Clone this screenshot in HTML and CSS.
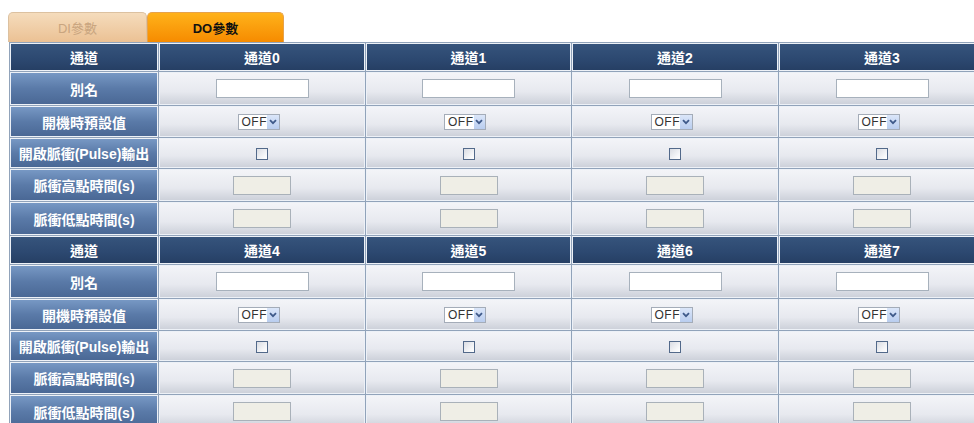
FILE: index.html
```html
<!DOCTYPE html>
<html lang="zh-Hant">
<head>
<meta charset="utf-8">
<title>DO參數</title>
<link rel="stylesheet" href="styles.css">
</head>
<body>
<div class="page">
  <div class="tabs">
    <div class="tab tab-off">DI參數</div>
    <div class="tab tab-on">DO參數</div>
  </div>
  <table class="grid">
    <colgroup>
      <col class="col-label"><col class="col-a"><col class="col-b"><col class="col-a"><col class="col-a">
    </colgroup>
    <tbody>
      <tr class="r-head">
        <td>通道</td><td>通道0</td><td>通道1</td><td>通道2</td><td>通道3</td>
      </tr>
      <tr class="r-alias">
        <td class="lbl">別名</td>
        <td class="val"><input class="txt" type="text"></td>
        <td class="val"><input class="txt" type="text"></td>
        <td class="val"><input class="txt" type="text"></td>
        <td class="val"><input class="txt" type="text"></td>
      </tr>
      <tr class="r-power">
        <td class="lbl">開機時預設值</td>
        <td class="val"><span class="sel"><span class="sel-text">OFF</span><span class="sel-btn"><svg viewBox="0 0 8 6" width="8" height="6"><path d="M1 1.2 4 4.2 7 1.2" fill="none" stroke="#3f5a8a" stroke-width="1.8"/></svg></span></span></td>
        <td class="val"><span class="sel"><span class="sel-text">OFF</span><span class="sel-btn"><svg viewBox="0 0 8 6" width="8" height="6"><path d="M1 1.2 4 4.2 7 1.2" fill="none" stroke="#3f5a8a" stroke-width="1.8"/></svg></span></span></td>
        <td class="val"><span class="sel"><span class="sel-text">OFF</span><span class="sel-btn"><svg viewBox="0 0 8 6" width="8" height="6"><path d="M1 1.2 4 4.2 7 1.2" fill="none" stroke="#3f5a8a" stroke-width="1.8"/></svg></span></span></td>
        <td class="val"><span class="sel"><span class="sel-text">OFF</span><span class="sel-btn"><svg viewBox="0 0 8 6" width="8" height="6"><path d="M1 1.2 4 4.2 7 1.2" fill="none" stroke="#3f5a8a" stroke-width="1.8"/></svg></span></span></td>
      </tr>
      <tr class="r-pulse">
        <td class="lbl">開啟脈衝(Pulse)輸出</td>
        <td class="val"><input class="chk" type="checkbox"></td>
        <td class="val"><input class="chk" type="checkbox"></td>
        <td class="val"><input class="chk" type="checkbox"></td>
        <td class="val"><input class="chk" type="checkbox"></td>
      </tr>
      <tr class="r-high">
        <td class="lbl">脈衝高點時間(s)</td>
        <td class="val"><input class="num" type="text" disabled></td>
        <td class="val"><input class="num" type="text" disabled></td>
        <td class="val"><input class="num" type="text" disabled></td>
        <td class="val"><input class="num" type="text" disabled></td>
      </tr>
      <tr class="r-low">
        <td class="lbl">脈衝低點時間(s)</td>
        <td class="val"><input class="num" type="text" disabled></td>
        <td class="val"><input class="num" type="text" disabled></td>
        <td class="val"><input class="num" type="text" disabled></td>
        <td class="val"><input class="num" type="text" disabled></td>
      </tr>
      <tr class="r-head">
        <td>通道</td><td>通道4</td><td>通道5</td><td>通道6</td><td>通道7</td>
      </tr>
      <tr class="r-alias">
        <td class="lbl">別名</td>
        <td class="val"><input class="txt" type="text"></td>
        <td class="val"><input class="txt" type="text"></td>
        <td class="val"><input class="txt" type="text"></td>
        <td class="val"><input class="txt" type="text"></td>
      </tr>
      <tr class="r-power">
        <td class="lbl">開機時預設值</td>
        <td class="val"><span class="sel"><span class="sel-text">OFF</span><span class="sel-btn"><svg viewBox="0 0 8 6" width="8" height="6"><path d="M1 1.2 4 4.2 7 1.2" fill="none" stroke="#3f5a8a" stroke-width="1.8"/></svg></span></span></td>
        <td class="val"><span class="sel"><span class="sel-text">OFF</span><span class="sel-btn"><svg viewBox="0 0 8 6" width="8" height="6"><path d="M1 1.2 4 4.2 7 1.2" fill="none" stroke="#3f5a8a" stroke-width="1.8"/></svg></span></span></td>
        <td class="val"><span class="sel"><span class="sel-text">OFF</span><span class="sel-btn"><svg viewBox="0 0 8 6" width="8" height="6"><path d="M1 1.2 4 4.2 7 1.2" fill="none" stroke="#3f5a8a" stroke-width="1.8"/></svg></span></span></td>
        <td class="val"><span class="sel"><span class="sel-text">OFF</span><span class="sel-btn"><svg viewBox="0 0 8 6" width="8" height="6"><path d="M1 1.2 4 4.2 7 1.2" fill="none" stroke="#3f5a8a" stroke-width="1.8"/></svg></span></span></td>
      </tr>
      <tr class="r-pulse">
        <td class="lbl">開啟脈衝(Pulse)輸出</td>
        <td class="val"><input class="chk" type="checkbox"></td>
        <td class="val"><input class="chk" type="checkbox"></td>
        <td class="val"><input class="chk" type="checkbox"></td>
        <td class="val"><input class="chk" type="checkbox"></td>
      </tr>
      <tr class="r-high">
        <td class="lbl">脈衝高點時間(s)</td>
        <td class="val"><input class="num" type="text" disabled></td>
        <td class="val"><input class="num" type="text" disabled></td>
        <td class="val"><input class="num" type="text" disabled></td>
        <td class="val"><input class="num" type="text" disabled></td>
      </tr>
      <tr class="r-low">
        <td class="lbl">脈衝低點時間(s)</td>
        <td class="val"><input class="num" type="text" disabled></td>
        <td class="val"><input class="num" type="text" disabled></td>
        <td class="val"><input class="num" type="text" disabled></td>
        <td class="val"><input class="num" type="text" disabled></td>
      </tr>
    </tbody>
  </table>
</div>
</body>
</html>
```
FILE: styles.css
```css
html, body {
  margin: 0;
  padding: 0;
  background: #ffffff;
  overflow: hidden;
}

.page {
  width: 1000px;
  padding: 12px 0 0 8px;
  font-family: "Liberation Sans", "Noto Sans CJK TC", sans-serif;
}

/* tab strip above the grid */
.tabs {
  display: flex;
  height: 30px;
}

.tab {
  box-sizing: border-box;
  height: 30px;
  border-radius: 5px 5px 0 0;
  display: flex;
  align-items: center;
  justify-content: center;
  font-size: 13px;
}

.tab-off {
  width: 139px;
  background: linear-gradient(#f5dcbc, #ebc194);
  border: 1px solid #dcc1a0;
  border-bottom: 0;
  color: #c9a57f;
}

.tab-on {
  width: 137px;
  background: linear-gradient(#ffb21a, #f68b00);
  border: 1px solid #e7a24a;
  border-bottom: 0;
  color: #111111;
  font-weight: bold;
}

/* parameter grid: 1px grey spacing between cells with a pale inner edge */
.grid {
  margin-left: 1px;
  width: 977px;
  border-collapse: separate;
  border-spacing: 1px;
  background: #91a3ba;
  table-layout: fixed;
}

.col-label { width: 148px; }
.col-a { width: 206px; }
.col-b { width: 205px; }

.grid td {
  box-sizing: border-box;
  padding: 0;
  border: 1px solid #edf1f7;
  text-align: center;
  vertical-align: middle;
  white-space: nowrap;
  font-size: 14px;
}

.r-head td {
  background: linear-gradient(#36547c, #2c4870 60%, #263f64);
  color: #ffffff;
  font-weight: bold;
}

.lbl {
  background: linear-gradient(#7798c4, #5a7aa8 50%, #4a6895);
  color: #ffffff;
  font-weight: bold;
}

.val {
  background: linear-gradient(#f3f4f8, #e7e9ef 60%, #cdd1da);
}

.r-head  { height: 28px; }
.r-alias { height: 33px; }
.r-power { height: 31px; }
.r-pulse { height: 30px; }
.r-high  { height: 32px; }
.r-low   { height: 33px; }

/* form controls */
.txt {
  box-sizing: border-box;
  width: 93px;
  height: 19px;
  margin: 0;
  padding: 0 2px;
  border: 1px solid #a7b1bc;
  background: #ffffff;
  display: inline-block;
  vertical-align: middle;
}

.num {
  box-sizing: border-box;
  width: 58px;
  height: 19px;
  margin: 0;
  padding: 0;
  border: 1px solid #a9b1b9;
  background: #efeee6;
  display: inline-block;
  vertical-align: middle;
}

.sel {
  box-sizing: border-box;
  display: inline-flex;
  align-items: center;
  width: 42px;
  height: 16px;
  margin-right: 7px;
  border: 1px solid #a4acb8;
  background: #ffffff;
  vertical-align: middle;
}

.sel-text {
  flex: 1;
  text-align: left;
  padding-left: 3px;
  font-family: "Liberation Sans", sans-serif;
  font-size: 12px;
  letter-spacing: 0.5px;
  line-height: 14px;
  color: #333333;
  font-weight: normal;
}

.sel-btn {
  width: 13px;
  height: 14px;
  display: flex;
  align-items: center;
  justify-content: center;
  background: linear-gradient(#dbe6f9, #b9cdef);
}

.chk {
  appearance: none;
  -webkit-appearance: none;
  box-sizing: border-box;
  width: 12px;
  height: 12px;
  margin: 0;
  border: 1px solid #52698a;
  background: linear-gradient(135deg, #d9dce3, #f6f7f9 70%, #ffffff);
  vertical-align: middle;
}
```
